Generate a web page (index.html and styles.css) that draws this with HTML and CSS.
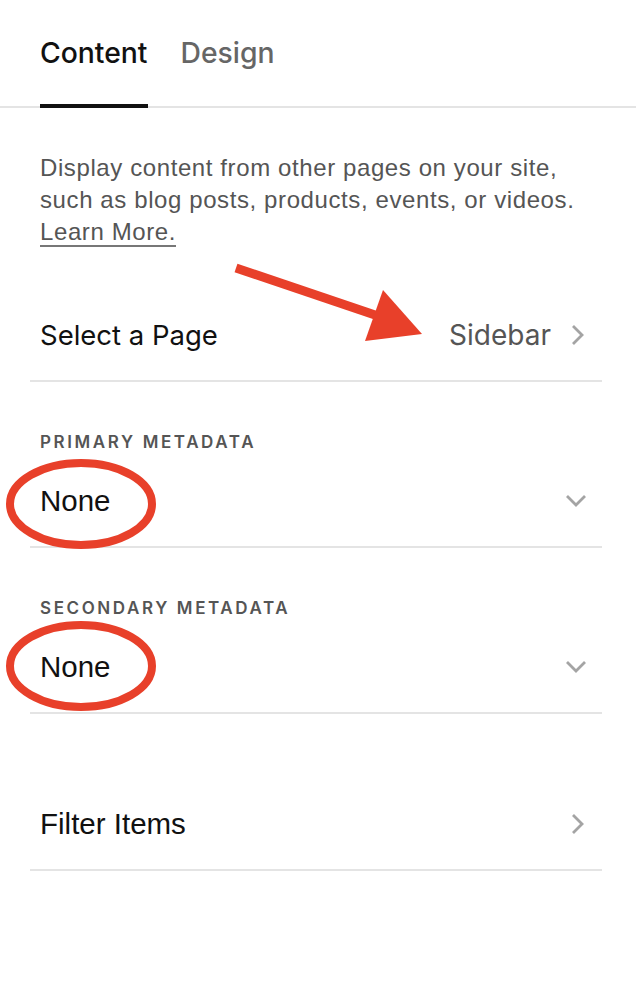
FILE: index.html
```html
<!DOCTYPE html>
<html lang="en">
<head>
<meta charset="utf-8">
<title>Summary block settings</title>
<link rel="stylesheet" href="styles.css">
</head>
<body>
<div class="panel">
  <nav class="tabs">
    <div class="tab active">Content</div>
    <div class="tab">Design</div>
  </nav>
  <div class="body">
    <p class="desc">Display content from other pages on your site,<br>such as blog posts, products, events, or videos.<br><a class="link" href="#">Learn More.</a></p>

    <div class="row nav-row">
      <span class="row-label">Select a Page</span>
      <span class="row-value">Sidebar
        <svg class="chev-right" width="14" height="22" viewBox="0 0 14 22"><path d="M2 2 L11 11 L2 20" fill="none" stroke="#a4a4a4" stroke-width="2.8"/></svg>
      </span>
    </div>

    <div class="field">
      <div class="field-label">PRIMARY METADATA</div>
      <div class="row select-row">
        <span class="select-value">None</span>
        <svg class="chev-down" width="22" height="14" viewBox="0 0 22 14"><path d="M2 2 L11 11 L20 2" fill="none" stroke="#a4a4a4" stroke-width="2.8"/></svg>
      </div>
    </div>

    <div class="field">
      <div class="field-label">SECONDARY METADATA</div>
      <div class="row select-row">
        <span class="select-value">None</span>
        <svg class="chev-down" width="22" height="14" viewBox="0 0 22 14"><path d="M2 2 L11 11 L20 2" fill="none" stroke="#a4a4a4" stroke-width="2.8"/></svg>
      </div>
    </div>

    <div class="row nav-row filter-row">
      <span class="select-value">Filter Items</span>
      <svg class="chev-right" width="14" height="22" viewBox="0 0 14 22"><path d="M2 2 L11 11 L2 20" fill="none" stroke="#a4a4a4" stroke-width="2.8"/></svg>
    </div>
  </div>

  <svg class="annotations" width="636" height="992" viewBox="0 0 636 992">
    <line x1="236" y1="268" x2="378" y2="316" stroke="#e8402a" stroke-width="9"/>
    <polygon points="383,290 422,334 365,341" fill="#e8402a"/>
    <ellipse cx="81" cy="504" rx="71" ry="41" fill="none" stroke="#e8402a" stroke-width="8"/>
    <ellipse cx="81" cy="666" rx="71" ry="41" fill="none" stroke="#e8402a" stroke-width="8"/>
  </svg>
</div>
</body>
</html>
```

FILE: styles.css
```css
* { box-sizing: border-box; }
html, body { margin: 0; padding: 0; background: #fff; }
body { width: 636px; height: 992px; overflow: hidden; }

.panel {
  position: relative;
  width: 636px;
  height: 992px;
  background: #fff;
}

.tabs {
  display: flex;
  gap: 33px;
  padding-left: 40px;
  height: 108px;
  box-shadow: inset 0 -2px 0 #e4e4e4;
}

.tab {
  height: 108px;
  display: flex;
  align-items: center;
  padding-bottom: 2px;
  font-family: Inter, "Liberation Sans", sans-serif;
  font-size: 28.3px;
  font-weight: 500;
  color: #666;
}

.tab.active {
  color: #111;
  box-shadow: inset 0 -4px 0 #111;
}

.body {
  padding: 0 34px 0 30px;
}

.desc {
  margin: 44px 0 0 10px;
  font-family: "Liberation Sans", Arial, sans-serif;
  font-size: 24px;
  line-height: 32px;
  letter-spacing: 0.6px;
  color: #555;
  white-space: nowrap;
}

.link {
  color: #555;
  text-decoration: underline;
  text-decoration-thickness: 2px;
  text-underline-offset: 5px;
  text-decoration-color: #777;
}

.row {
  display: flex;
  align-items: center;
  justify-content: space-between;
  height: 90px;
  padding: 0 17px 2px 10px;
  border-bottom: 2px solid #e4e4e4;
}

.nav-row { margin-top: 44px; }

.row-label {
  font-family: Inter, "Liberation Sans", sans-serif;
  font-size: 27.5px;
  color: #111;
}

.row-value {
  display: flex;
  align-items: center;
  gap: 20px;
  font-family: Inter, "Liberation Sans", sans-serif;
  font-size: 28px;
  color: #555;
}

.chev-right, .chev-down { display: block; flex: none; }

.field { margin-top: 50px; }

.field-label {
  padding-left: 10px;
  height: 20px;
  line-height: 20px;
  margin-bottom: 4px;
  font-family: Inter, "Liberation Sans", sans-serif;
  font-size: 17px;
  font-weight: 600;
  letter-spacing: 2.6px;
  color: #555;
}

.select-row {
  height: 92px;
  padding-right: 15px;
  padding-bottom: 0;
}

.select-value {
  font-family: "Liberation Sans", Arial, sans-serif;
  font-size: 29.5px;
  color: #111;
}

.filter-row { margin-top: 67px; }

.annotations {
  position: absolute;
  left: 0;
  top: 0;
  pointer-events: none;
}
```
